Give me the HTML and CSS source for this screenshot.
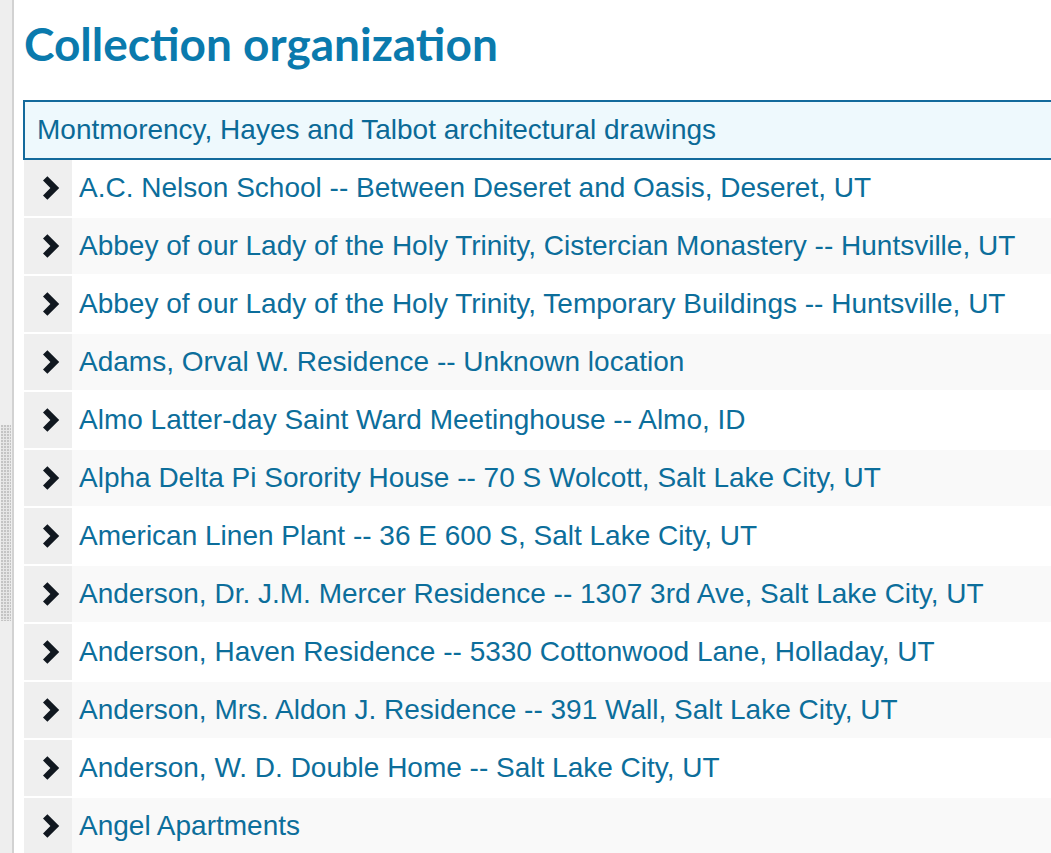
FILE: index.html
```html
<!DOCTYPE html>
<html lang="en">
<head>
  <meta charset="UTF-8">
  <meta name="viewport" content="width=device-width, initial-scale=1.0">
  <title>Collection organization</title>
  <link rel="stylesheet" href="styles.css">
</head>
<body>
  <div class="sidebar">
    <div class="grip"></div>
  </div>

  <div class="main">
    <h1>Collection organization</h1>

    <div class="tree">
      <div class="tree-root">Montmorency, Hayes and Talbot architectural drawings</div>

      <div class="node">
        <span class="toggle"><svg viewBox="0 0 17 24"><path d="M0 4.6 L4.4 0.2 L16.2 12 L4.4 23.8 L0 19.4 L7.4 12 Z"/></svg></span>
        <a class="title">A.C. Nelson School -- Between Deseret and Oasis, Deseret, UT</a>
      </div>
      <div class="node">
        <span class="toggle"><svg viewBox="0 0 17 24"><path d="M0 4.6 L4.4 0.2 L16.2 12 L4.4 23.8 L0 19.4 L7.4 12 Z"/></svg></span>
        <a class="title">Abbey of our Lady of the Holy Trinity, Cistercian Monastery -- Huntsville, UT</a>
      </div>
      <div class="node">
        <span class="toggle"><svg viewBox="0 0 17 24"><path d="M0 4.6 L4.4 0.2 L16.2 12 L4.4 23.8 L0 19.4 L7.4 12 Z"/></svg></span>
        <a class="title">Abbey of our Lady of the Holy Trinity, Temporary Buildings -- Huntsville, UT</a>
      </div>
      <div class="node">
        <span class="toggle"><svg viewBox="0 0 17 24"><path d="M0 4.6 L4.4 0.2 L16.2 12 L4.4 23.8 L0 19.4 L7.4 12 Z"/></svg></span>
        <a class="title">Adams, Orval W. Residence -- Unknown location</a>
      </div>
      <div class="node">
        <span class="toggle"><svg viewBox="0 0 17 24"><path d="M0 4.6 L4.4 0.2 L16.2 12 L4.4 23.8 L0 19.4 L7.4 12 Z"/></svg></span>
        <a class="title">Almo Latter-day Saint Ward Meetinghouse -- Almo, ID</a>
      </div>
      <div class="node">
        <span class="toggle"><svg viewBox="0 0 17 24"><path d="M0 4.6 L4.4 0.2 L16.2 12 L4.4 23.8 L0 19.4 L7.4 12 Z"/></svg></span>
        <a class="title">Alpha Delta Pi Sorority House -- 70 S Wolcott, Salt Lake City, UT</a>
      </div>
      <div class="node">
        <span class="toggle"><svg viewBox="0 0 17 24"><path d="M0 4.6 L4.4 0.2 L16.2 12 L4.4 23.8 L0 19.4 L7.4 12 Z"/></svg></span>
        <a class="title">American Linen Plant -- 36 E 600 S, Salt Lake City, UT</a>
      </div>
      <div class="node">
        <span class="toggle"><svg viewBox="0 0 17 24"><path d="M0 4.6 L4.4 0.2 L16.2 12 L4.4 23.8 L0 19.4 L7.4 12 Z"/></svg></span>
        <a class="title">Anderson, Dr. J.M. Mercer Residence -- 1307 3rd Ave, Salt Lake City, UT</a>
      </div>
      <div class="node">
        <span class="toggle"><svg viewBox="0 0 17 24"><path d="M0 4.6 L4.4 0.2 L16.2 12 L4.4 23.8 L0 19.4 L7.4 12 Z"/></svg></span>
        <a class="title">Anderson, Haven Residence -- 5330 Cottonwood Lane, Holladay, UT</a>
      </div>
      <div class="node">
        <span class="toggle"><svg viewBox="0 0 17 24"><path d="M0 4.6 L4.4 0.2 L16.2 12 L4.4 23.8 L0 19.4 L7.4 12 Z"/></svg></span>
        <a class="title">Anderson, Mrs. Aldon J. Residence -- 391 Wall, Salt Lake City, UT</a>
      </div>
      <div class="node">
        <span class="toggle"><svg viewBox="0 0 17 24"><path d="M0 4.6 L4.4 0.2 L16.2 12 L4.4 23.8 L0 19.4 L7.4 12 Z"/></svg></span>
        <a class="title">Anderson, W. D. Double Home -- Salt Lake City, UT</a>
      </div>
      <div class="node">
        <span class="toggle"><svg viewBox="0 0 17 24"><path d="M0 4.6 L4.4 0.2 L16.2 12 L4.4 23.8 L0 19.4 L7.4 12 Z"/></svg></span>
        <a class="title">Angel Apartments</a>
      </div>
    </div>
  </div>
</body>
</html>
```

FILE: styles.css
```css
body {
  margin: 0;
  height: 853px;
  overflow: hidden;
  display: flex;
  font-family: "Liberation Sans", Arial, sans-serif;
  background: #fff;
}
.sidebar {
  flex: 0 0 12px;
  background: #eeeeee;
  border-right: 2px solid #d2d2d2;
  margin-right: 1px;
}
.grip {
  margin: 425px 1px 0 1px;
  height: 196px;
  background-color: #e6e6e6;
  background-image:
    linear-gradient(90deg, transparent 2px, #e6e6e6 2px),
    linear-gradient(180deg, #c4c4c4 2px, transparent 2px);
  background-size: 3px 3px;
}
.main {
  flex: 0 0 1100px;
  padding-left: 8px;
}
h1 {
  font-family: Lato, "Open Sans", sans-serif;
  font-weight: bold;
  font-size: 46px;
  line-height: 56px;
  color: #0a7aad;
  margin: 16px 0 28px 1px;
}
.tree-root {
  border: 2px solid #136a9c;
  background: #eef9fd;
  color: #0b6a97;
  font-size: 28px;
  height: 56px;
  line-height: 56px;
  padding-left: 12px;
}
.node {
  display: flex;
  height: 56px;
  margin: 0 0 2px 1px;
  background: #fff;
}
.node:nth-child(odd) {
  background: #f9f9f9;
}
.toggle {
  flex: 0 0 48px;
  background: #efefef;
  display: flex;
  align-items: center;
  justify-content: center;
}
.toggle svg {
  width: 17px;
  height: 24px;
  margin-left: 7px;
  fill: #111820;
}
.title {
  display: flex;
  align-items: center;
  padding-left: 7px;
  font-size: 28px;
  color: #0c6e9b;
  white-space: nowrap;
}
```
